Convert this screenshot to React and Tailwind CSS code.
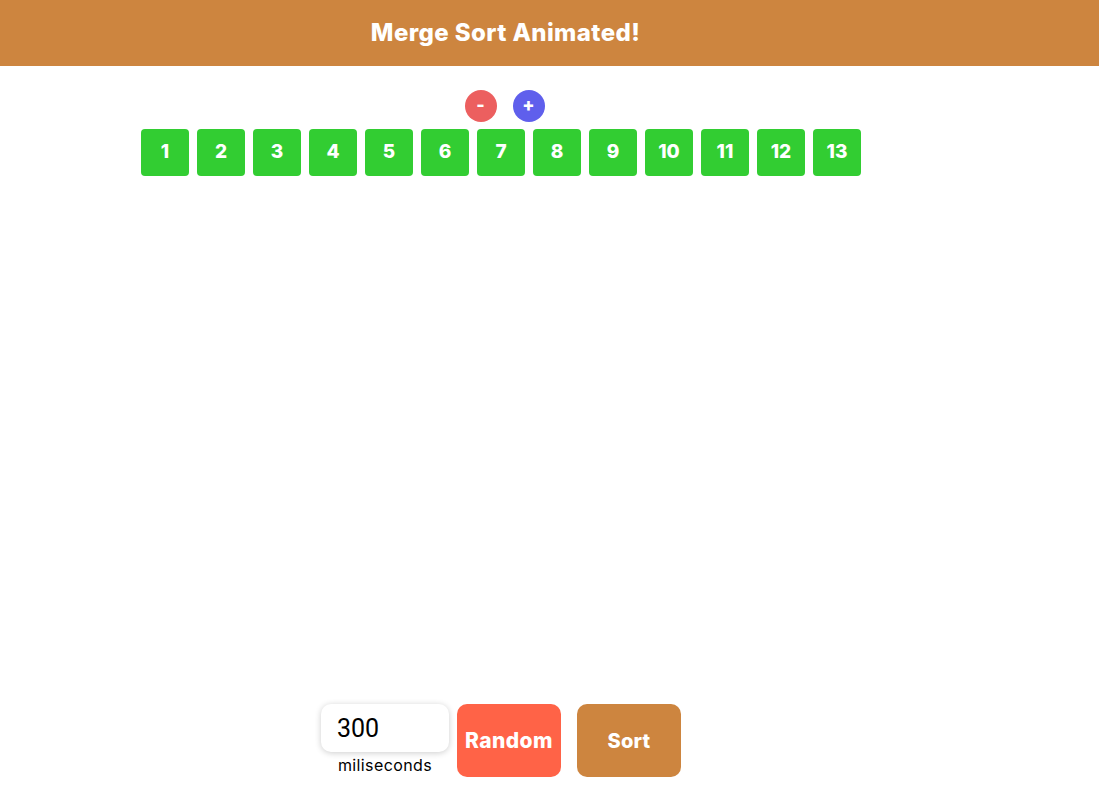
import React from "react";

const nums = [1,2,3,4,5,6,7,8,9,10,11,12,13];

export default function App() {
  return (
    <div className="h-[793px] w-full flex flex-col bg-white" style={{fontFamily: "Inter, 'Noto Sans', sans-serif"}}>
      <header className="h-[66px] bg-[#cd853f] flex items-center justify-center pr-[88px] shrink-0">
        <h1 className="text-white text-[24px] font-extrabold tracking-[0.4px]">Merge Sort Animated!</h1>
      </header>
      <div className="flex justify-center gap-4 mt-6 pr-[90px]">
        <button className="w-8 h-8 rounded-full bg-[#ec5f5f] text-white font-extrabold text-[18px] leading-none flex items-center justify-center pb-[2px]">-</button>
        <button className="w-8 h-8 rounded-full bg-[#5f5fec] text-white font-extrabold text-[18px] leading-none flex items-center justify-center pb-[2px]">+</button>
      </div>
      <div className="flex gap-2 mt-[7px] pl-[141px]">
        {nums.map((n) => (
          <div key={n} className="w-12 h-[47px] rounded bg-[#32cd32] text-white font-extrabold text-[19px] flex items-center justify-center">{n}</div>
        ))}
      </div>
      <div className="mt-auto mb-4 flex justify-center gap-2 pr-[97px]">
        <div className="flex flex-col items-center">
          <input
            defaultValue="300"
            className="w-32 h-12 rounded-[10px] shadow-[0_1px_6px_rgba(0,0,0,0.2)] px-4 text-[25px] text-black outline-none"
            style={{fontFamily: "Roboto, 'Liberation Sans', sans-serif"}}
          />
          <span className="text-[16px] tracking-[0.4px] text-black mt-[1px]">miliseconds</span>
        </div>
        <button className="w-[104px] h-[73px] rounded-[10px] bg-[#ff6347] text-white font-extrabold text-[21px] tracking-[0.4px]">Random</button>
        <button className="ml-2 w-[104px] h-[73px] rounded-[10px] bg-[#cd853f] text-white font-extrabold text-[20px] tracking-[0.2px]">Sort</button>
      </div>
    </div>
  );
}
